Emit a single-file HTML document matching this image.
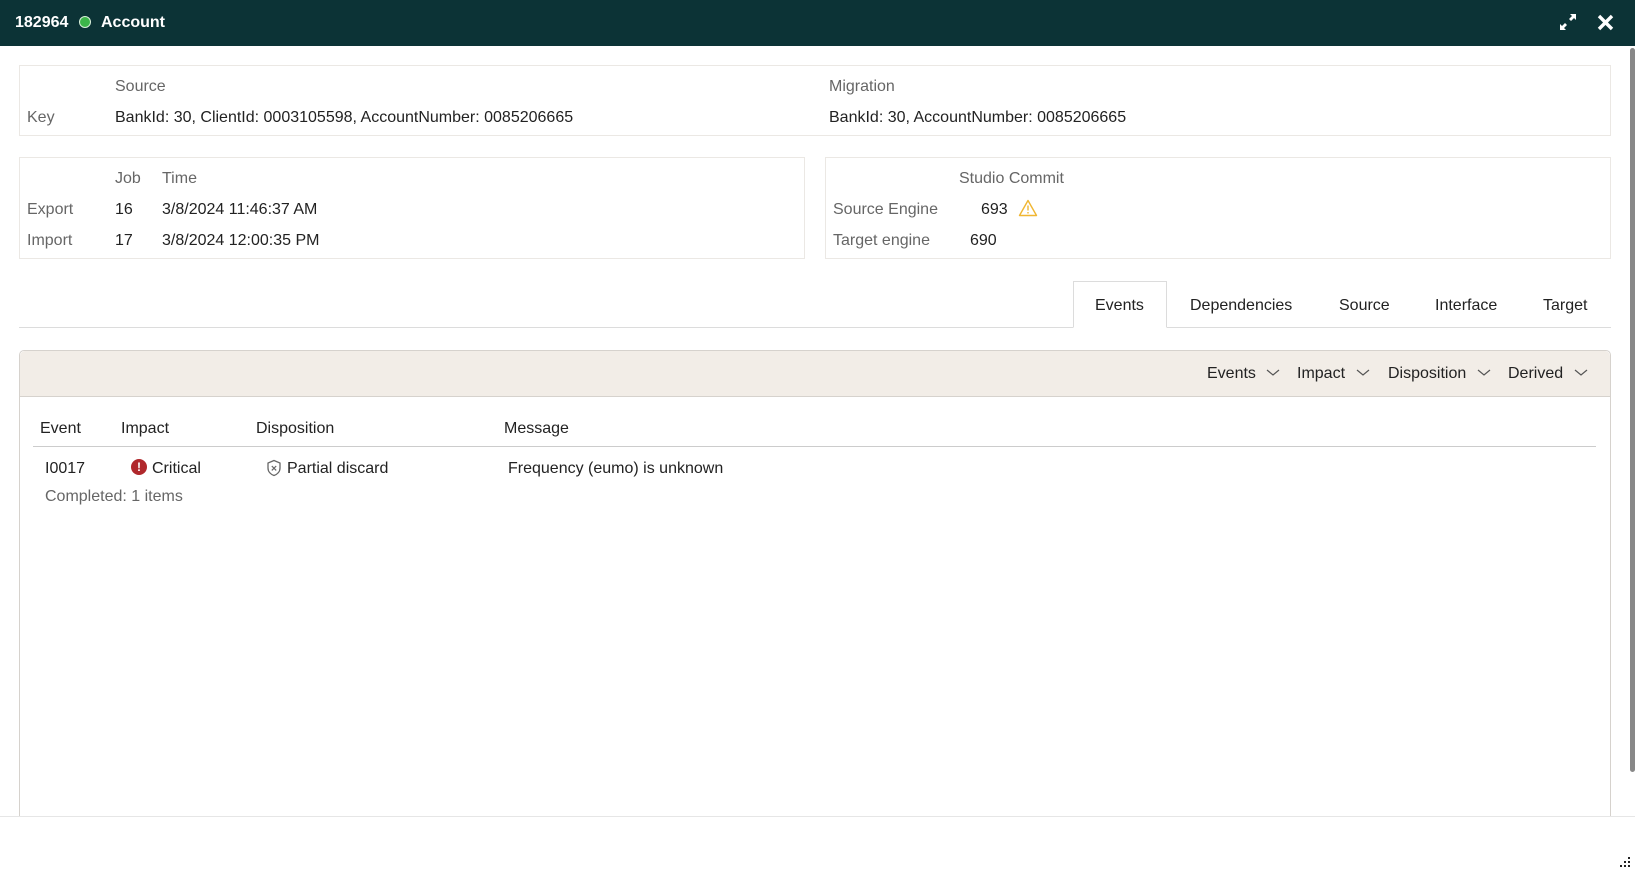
<!DOCTYPE html>
<html><head><meta charset="utf-8"><style>
*{box-sizing:border-box;margin:0;padding:0}
body{width:1635px;height:874px;position:relative;overflow:hidden;background:#fff;font-family:"Liberation Sans",Arial,sans-serif;font-size:16px;color:#222}
.a{position:absolute;white-space:nowrap;line-height:20px;margin-top:2px}
.g{color:#666}
.hdr{position:absolute;left:0;top:0;width:1635px;height:46px;background:#0c3336}
.box{position:absolute;border:1px solid #ebe8e4}
</style></head><body>
<div class="hdr"></div>
<div class="a" style="left:15px;top:11px;color:#fff;font-weight:bold;font-size:16px">182964</div>
<div style="position:absolute;left:79px;top:16px;width:12px;height:12px;border-radius:50%;background:#3cb54a;border:1px solid #d8f0da"></div>
<div class="a" style="left:101px;top:11px;color:#fff;font-weight:bold;font-size:16px">Account</div>
<svg style="position:absolute;left:1558px;top:12px" width="20" height="20" viewBox="0 0 20 20"><path d="M12 2h6v6l-2-2-3 3-2-2 3-3z M8 18H2v-6l2 2 3-3 2 2-3 3z" fill="#fff"/></svg>
<svg style="position:absolute;left:1596px;top:13px" width="19" height="19" viewBox="0 0 19 19"><path d="M3 3L16 16M16 3L3 16" stroke="#fff" stroke-width="3.4"/></svg>
<div style="position:absolute;left:1630px;top:48px;width:5px;height:724px;background:#888;border-radius:3px"></div>

<div class="box" style="left:19px;top:65px;width:1592px;height:71px"></div>
<div class="a g" style="left:115px;top:75px">Source</div>
<div class="a g" style="left:829px;top:75px">Migration</div>
<div class="a g" style="left:27px;top:106px">Key</div>
<div class="a" style="left:115px;top:106px">BankId: 30, ClientId: 0003105598, AccountNumber: 0085206665</div>
<div class="a" style="left:829px;top:106px">BankId: 30, AccountNumber: 0085206665</div>

<div class="box" style="left:19px;top:157px;width:786px;height:102px"></div>
<div class="box" style="left:825px;top:157px;width:786px;height:102px"></div>
<div class="a g" style="left:115px;top:167px">Job</div>
<div class="a g" style="left:162px;top:167px">Time</div>
<div class="a g" style="left:27px;top:198px">Export</div>
<div class="a" style="left:115px;top:198px">16</div>
<div class="a" style="left:162px;top:198px">3/8/2024 11:46:37 AM</div>
<div class="a g" style="left:27px;top:229px">Import</div>
<div class="a" style="left:115px;top:229px">17</div>
<div class="a" style="left:162px;top:229px">3/8/2024 12:00:35 PM</div>
<div class="a g" style="left:959px;top:167px">Studio Commit</div>
<div class="a g" style="left:833px;top:198px">Source Engine</div>
<div class="a" style="left:981px;top:198px">693</div>
<svg style="position:absolute;left:1018px;top:199px" width="20" height="18" viewBox="0 0 20 18"><path d="M10 1.5L18.5 16.5H1.5Z" fill="none" stroke="#f0b632" stroke-width="1.4" stroke-linejoin="round"/><path d="M10 6.5v5M10 13v1.5" stroke="#f0b632" stroke-width="1.4"/></svg>
<div class="a g" style="left:833px;top:229px">Target engine</div>
<div class="a" style="left:970px;top:229px">690</div>

<div style="position:absolute;left:19px;top:327px;width:1592px;height:1px;background:#dcdcdc"></div>
<div style="position:absolute;left:1073px;top:281px;width:94px;height:47px;border:1px solid #dcdcdc;border-bottom:1px solid #fff;background:#fff"></div>
<div class="a" style="left:1095px;top:294px">Events</div>
<div class="a" style="left:1190px;top:294px">Dependencies</div>
<div class="a" style="left:1339px;top:294px">Source</div>
<div class="a" style="left:1435px;top:294px">Interface</div>
<div class="a" style="left:1543px;top:294px">Target</div>

<div style="position:absolute;left:19px;top:350px;width:1592px;height:500px;border:1px solid #d6d2cd;border-radius:5px 5px 0 0"></div>
<div style="position:absolute;left:20px;top:351px;width:1590px;height:46px;background:#f2ede7;border-bottom:1px solid #d6d2cd;border-radius:5px 5px 0 0"></div>
<div class="a" style="left:1207px;top:362px">Events</div>
<div class="a" style="left:1297px;top:362px">Impact</div>
<div class="a" style="left:1388px;top:362px">Disposition</div>
<div class="a" style="left:1508px;top:362px">Derived</div>
<svg style="position:absolute;left:0;top:0" width="1635" height="400"><g fill="none" stroke="#555" stroke-width="1.2"><path d="M1267 370l6 5 6-5M1357 370l6 5 6-5M1478 370l6 5 6-5M1575 370l6 5 6-5"/></g></svg>

<div class="a" style="left:40px;top:417px">Event</div>
<div class="a" style="left:121px;top:417px">Impact</div>
<div class="a" style="left:256px;top:417px">Disposition</div>
<div class="a" style="left:504px;top:417px">Message</div>
<div style="position:absolute;left:33px;top:446px;width:1563px;height:1px;background:#ccc"></div>
<div class="a" style="left:45px;top:457px">I0017</div>
<div style="position:absolute;left:131px;top:459px;width:16px;height:16px;border-radius:50%;background:#b0282c;color:#fff;font-size:12px;font-weight:bold;text-align:center;line-height:16px">!</div>
<div class="a" style="left:152px;top:457px">Critical</div>
<svg style="position:absolute;left:266px;top:459px" width="16" height="18" viewBox="0 0 16 18"><path d="M8 1.5L14 4v5c0 4-3 6.5-6 7.5C5 15.5 2 13 2 9V4z" fill="none" stroke="#666" stroke-width="1.3"/><path d="M5.8 7l4.4 4.4M10.2 7l-4.4 4.4" stroke="#666" stroke-width="1.2"/></svg>
<div class="a" style="left:287px;top:457px">Partial discard</div>
<div class="a" style="left:508px;top:457px">Frequency (eumo) is unknown</div>
<div class="a g" style="left:45px;top:485px">Completed: 1 items</div>

<div style="position:absolute;left:0;top:816px;width:1635px;height:58px;background:#fff;border-top:1px solid #e6e6e6"></div>
<svg style="position:absolute;left:1618px;top:857px" width="14" height="14"><g fill="#222"><rect x="10" y="0" width="2" height="2"/><rect x="6" y="4" width="2" height="2"/><rect x="10" y="4" width="2" height="2"/><rect x="2" y="8" width="2" height="2"/><rect x="6" y="8" width="2" height="2"/><rect x="10" y="8" width="2" height="2"/></g></svg>
</body></html>
